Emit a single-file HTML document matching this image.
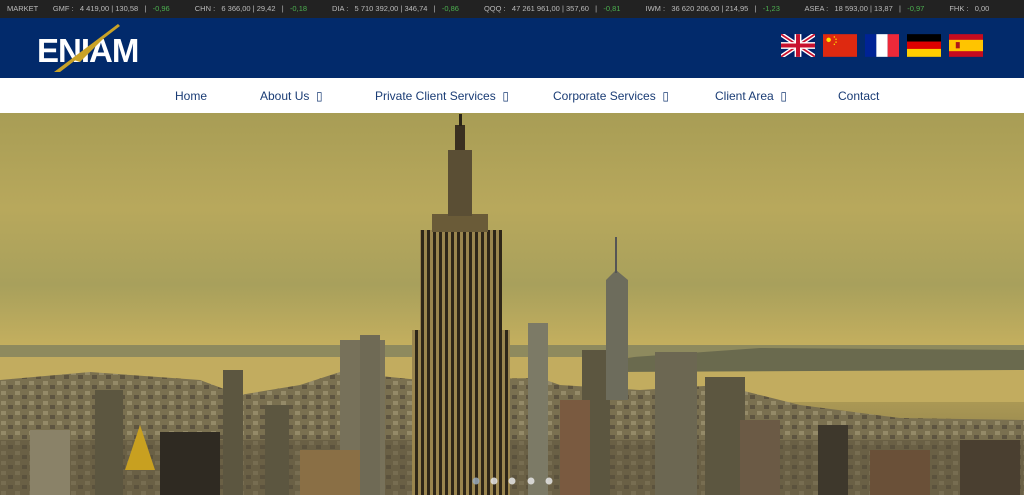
<!DOCTYPE html>
<html><head><meta charset="utf-8"><style>
*{margin:0;padding:0;box-sizing:border-box}
body{width:1024px;height:495px;overflow:hidden;font-family:"Liberation Sans",Arial,sans-serif;background:#fff}
.tick{height:18px;background:#222;color:#bbb;font-size:7.5px;line-height:18px;white-space:nowrap;padding-left:7px}
.tick .g{color:#4caf50}
.hdr{height:60px;background:#022a6b;position:relative;overflow:hidden}
.logo{position:absolute;left:37px;top:16px;color:#fff;font-weight:bold;font-size:33px;letter-spacing:-1px;line-height:33px}
.flags{position:absolute;top:16px;left:781px;display:flex;gap:8px}
.flags svg{width:34px;height:23px;display:block}
.nav{height:35px;background:#fff;position:relative;font-size:12px;color:#1a3c75}
.nav span{position:absolute;top:11px}
.hero{position:absolute;top:113px;left:0;width:1024px;height:382px;overflow:hidden}
</style></head><body>
<div class="tick">MARKET&nbsp;&nbsp;&nbsp;&nbsp;&nbsp;&nbsp; GMF :&nbsp;&nbsp; 4 419,00 | 130,58 &nbsp;&nbsp;| &nbsp;&nbsp;<span class="g">-0,96</span>&nbsp;&nbsp;&nbsp;&nbsp;&nbsp;&nbsp;&nbsp;&nbsp;&nbsp;&nbsp;&nbsp; CHN :&nbsp;&nbsp; 6 366,00 | 29,42 &nbsp;&nbsp;| &nbsp;&nbsp;<span class="g">-0,18</span>&nbsp;&nbsp;&nbsp;&nbsp;&nbsp;&nbsp;&nbsp;&nbsp;&nbsp;&nbsp;&nbsp; DIA :&nbsp;&nbsp; 5 710 392,00 | 346,74 &nbsp;&nbsp;| &nbsp;&nbsp;<span class="g">-0,86</span>&nbsp;&nbsp;&nbsp;&nbsp;&nbsp;&nbsp;&nbsp;&nbsp;&nbsp;&nbsp;&nbsp; QQQ :&nbsp;&nbsp; 47 261 961,00 | 357,60 &nbsp;&nbsp;| &nbsp;&nbsp;<span class="g">-0,81</span>&nbsp;&nbsp;&nbsp;&nbsp;&nbsp;&nbsp;&nbsp;&nbsp;&nbsp;&nbsp;&nbsp; IWM :&nbsp;&nbsp; 36 620 206,00 | 214,95 &nbsp;&nbsp;| &nbsp;&nbsp;<span class="g">-1,23</span>&nbsp;&nbsp;&nbsp;&nbsp;&nbsp;&nbsp;&nbsp;&nbsp;&nbsp;&nbsp;&nbsp; ASEA :&nbsp;&nbsp; 18 593,00 | 13,87 &nbsp;&nbsp;| &nbsp;&nbsp;<span class="g">-0,97</span>&nbsp;&nbsp;&nbsp;&nbsp;&nbsp;&nbsp;&nbsp;&nbsp;&nbsp;&nbsp;&nbsp; FHK :&nbsp;&nbsp; 0,00</div>
<div class="hdr">
 <div class="logo">ENIAM</div>
 <svg style="position:absolute;left:50px;top:6px" width="70" height="50"><polygon points="68,0 4,48 10,48 70,2" fill="#c9a227"/><polygon points="68,0 24,36 30,38" fill="#c9a227"/></svg>
 <div class="flags">
  <svg viewBox="0 0 60 40"><rect width="60" height="40" fill="#012169"/><path d="M0,0L60,40M60,0L0,40" stroke="#fff" stroke-width="8"/><path d="M0,0L60,40M60,0L0,40" stroke="#c8102e" stroke-width="3"/><path d="M30,0V40M0,20H60" stroke="#fff" stroke-width="12"/><path d="M30,0V40M0,20H60" stroke="#c8102e" stroke-width="7"/></svg>
  <svg viewBox="0 0 60 40"><rect width="60" height="40" fill="#de2910"/><circle cx="10" cy="10" r="4" fill="#ffde00"/><circle cx="20" cy="5" r="1.3" fill="#ffde00"/><circle cx="23" cy="9" r="1.3" fill="#ffde00"/><circle cx="23" cy="14" r="1.3" fill="#ffde00"/><circle cx="20" cy="18" r="1.3" fill="#ffde00"/></svg>
  <svg viewBox="0 0 60 40"><rect width="20" height="40" fill="#002395"/><rect x="20" width="20" height="40" fill="#fff"/><rect x="40" width="20" height="40" fill="#ed2939"/></svg>
  <svg viewBox="0 0 60 40"><rect width="60" height="14" fill="#000"/><rect y="13" width="60" height="14" fill="#dd0000"/><rect y="26" width="60" height="14" fill="#ffce00"/></svg>
  <svg viewBox="0 0 60 40"><rect width="60" height="40" fill="#c60b1e"/><rect y="10" width="60" height="20" fill="#ffc400"/><rect x="12" y="14" width="7" height="11" fill="#ad1519"/></svg>
 </div>
</div>
<div class="nav">
 <span style="left:175px">Home</span>
 <span style="left:260px">About Us &nbsp;▯</span>
 <span style="left:375px">Private Client Services &nbsp;▯</span>
 <span style="left:553px">Corporate Services &nbsp;▯</span>
 <span style="left:715px">Client Area &nbsp;▯</span>
 <span style="left:838px">Contact</span>
</div>
<div class="hero">
<svg width="1024" height="382" viewBox="0 113 1024 382">
<defs>
<linearGradient id="sky" x1="0" y1="0" x2="0" y2="1"><stop offset="0" stop-color="#a89d55"/><stop offset="0.25" stop-color="#b8a85c"/><stop offset="0.45" stop-color="#a8a05c"/><stop offset="0.62" stop-color="#c6b05e"/><stop offset="1" stop-color="#7a6e44"/></linearGradient>
<pattern id="win" width="6" height="8" patternUnits="userSpaceOnUse"><rect width="6" height="8" fill="#9a854e"/><rect x="1" y="0" width="3" height="8" fill="#2e2618"/></pattern>
<pattern id="bld" width="14" height="10" patternUnits="userSpaceOnUse"><rect width="14" height="10" fill="#7a7050"/><rect x="1" y="1" width="5" height="4" fill="#948a68"/><rect x="8" y="5" width="5" height="4" fill="#5d5440"/></pattern>
</defs>
<rect x="0" y="113" width="1024" height="382" fill="url(#sky)"/>
<rect x="0" y="345" width="1024" height="12" fill="#8e8a5e"/>
<rect x="0" y="357" width="1024" height="45" fill="#c2ac5f"/>
<path d="M620,358 L760,348 L1024,350 L1024,370 L620,372Z" fill="#6a6a4e"/>
<path d="M0,380 L90,372 L200,380 L240,395 L300,385 L340,372 L420,380 L540,378 L560,385 L640,390 L720,385 L800,405 L900,418 L1024,420 L1024,495 L0,495Z" fill="url(#bld)"/>
<rect x="0" y="440" width="1024" height="55" fill="#5a503a" opacity="0.5"/>
<g fill="#5c5640">
<rect x="223" y="370" width="20" height="125"/><rect x="265" y="405" width="24" height="90"/><rect x="95" y="390" width="28" height="105"/>
<rect x="340" y="340" width="45" height="155" fill="#77715a"/><rect x="360" y="335" width="20" height="160" fill="#6f6a55"/><rect x="528" y="323" width="20" height="172" fill="#7c7a66"/>
<rect x="582" y="350" width="28" height="145"/><rect x="655" y="352" width="42" height="143" fill="#6c6752"/><rect x="705" y="377" width="40" height="118"/>
<rect x="818" y="425" width="30" height="70" fill="#3e382c"/><rect x="960" y="440" width="60" height="55" fill="#4a3f30"/><rect x="160" y="432" width="60" height="63" fill="#2f2a22"/>
<rect x="300" y="450" width="60" height="45" fill="#8a6f45"/><rect x="560" y="400" width="30" height="95" fill="#7a5a40"/><rect x="870" y="450" width="60" height="45" fill="#6a5038"/>
<rect x="30" y="430" width="40" height="65" fill="#8a8268"/><rect x="740" y="420" width="40" height="75" fill="#6b5a45"/>
</g>
<path d="M125,470 L140,425 L155,470Z" fill="#c8a020"/>
<path d="M606,280 L616,270 L628,280 L628,400 L606,400Z" fill="#6d6c5c"/>
<rect x="615" y="237" width="2" height="36" fill="#555"/>
<rect x="412" y="330" width="98" height="165" fill="url(#win)"/>
<rect x="420" y="230" width="82" height="100" fill="url(#win)"/>
<rect x="432" y="214" width="56" height="18" fill="#6a5b38"/>
<rect x="448" y="150" width="24" height="66" fill="#5a4e34"/>
<rect x="455" y="125" width="10" height="25" fill="#3a3020"/>
<rect x="459" y="114" width="3" height="12" fill="#2a2418"/>
<g fill="#e6e6e6" opacity="0.85"><circle cx="476" cy="481" r="3.5" fill="#9ab"/><circle cx="494" cy="481" r="3.5"/><circle cx="512" cy="481" r="3.5"/><circle cx="531" cy="481" r="3.5"/><circle cx="549" cy="481" r="3.5"/></g>
</svg>
</div>
</body></html>
